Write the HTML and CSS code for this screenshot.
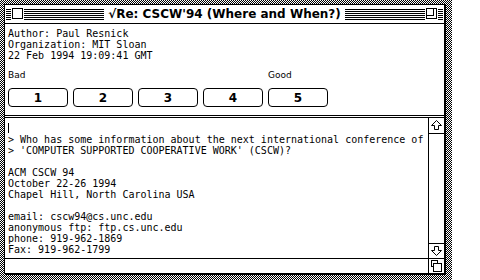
FILE: index.html
```html
<!DOCTYPE html>
<html>
<head>
    <link rel="stylesheet" href="styles.css">
</head>
<body>
    <div class="desktop">
        <div class="window">
            <div class="titlebar">
                <div class="stripes edge"></div>
                <div class="box-gap"><div class="close-box"></div></div>
                <div class="stripes"></div>
                <div class="title">√Re: CSCW'94 (Where and When?)</div>
                <div class="stripes"></div>
                <div class="box-gap"><div class="zoom-box"><div class="zoom-inner"></div></div></div>
                <div class="stripes edge"></div>
            </div>

            <div class="header">
                <div>Author: Paul Resnick</div>
                <div>Organization: MIT Sloan</div>
                <div>22 Feb 1994 19:09:41 GMT</div>
            </div>

            <div class="rating">
                <div class="rating-label">Bad</div>
                <div class="rating-label good">Good</div>
                <button class="rate-btn">1</button>
                <button class="rate-btn">2</button>
                <button class="rate-btn">3</button>
                <button class="rate-btn">4</button>
                <button class="rate-btn">5</button>
            </div>

            <div class="separator"></div>

            <div class="main">
                <div class="text-col">
                    <div class="message"><span class="cursor"></span>
&gt; Who has some information about the next international conference of
&gt; 'COMPUTER SUPPORTED COOPERATIVE WORK' (CSCW)?

ACM CSCW 94
October 22-26 1994
Chapel Hill, North Carolina USA

email: cscw94@cs.unc.edu
anonymous ftp: ftp.cs.unc.edu
phone: 919-962-1869
Fax: 919-962-1799</div>
                    <div class="hbar"></div>
                </div>
                <div class="vscroll">
                    <div class="arrow up">
                        <svg width="15" height="15" viewBox="0 0 15 15">
                            <polygon points="7.5,2.5 12.5,7.5 9.5,7.5 9.5,11.5 5.5,11.5 5.5,7.5 2.5,7.5" fill="#fff" stroke="#000" stroke-width="1"/>
                        </svg>
                    </div>
                    <div class="track"></div>
                    <div class="arrow down">
                        <svg width="15" height="14" viewBox="0 0 15 14">
                            <polygon points="7.5,11.5 12.5,6.5 9.5,6.5 9.5,2.5 5.5,2.5 5.5,6.5 2.5,6.5" fill="#fff" stroke="#000" stroke-width="1"/>
                        </svg>
                    </div>
                    <div class="grow">
                        <svg width="15" height="14" viewBox="0 0 15 14">
                            <rect x="2.5" y="1.5" width="6" height="6" fill="#fff" stroke="#000"/>
                            <rect x="4.5" y="4.5" width="8" height="8" fill="#fff" stroke="#000"/>
                        </svg>
                    </div>
                </div>
            </div>
        </div>
    </div>
</body>
</html>
```

FILE: styles.css
```css
body {
    margin: 0;
    width: 480px;
    height: 280px;
    overflow: hidden;
    background: #fff;
    font-family: "DejaVu Sans Mono", monospace;
}
.desktop {
    width: 452px;
    height: 280px;
    padding: 4px 0 0 4px;
    box-sizing: border-box;
    background: repeating-conic-gradient(#000 0 25%, #fff 0 50%) 0 0 / 2px 2px;
}
.window {
    width: 441px;
    height: 270px;
    box-sizing: border-box;
    border: 1px solid #000;
    background: #fff;
    box-shadow: 1px 1px 0 #000;
    display: flex;
    flex-direction: column;
}

/* title bar */
.titlebar {
    height: 18px;
    border-bottom: 1px solid #000;
    display: flex;
    align-items: flex-start;
    padding: 0 1px;
    flex-shrink: 0;
}
.stripes {
    flex: 1;
    height: 11px;
    margin-top: 4px;
    background: repeating-linear-gradient(#000 0 1px, #fff 1px 2px);
}
.stripes.edge {
    flex: 0 0 5px;
}
.box-gap {
    padding: 3px 1px 0;
}
.close-box,
.zoom-box {
    width: 11px;
    height: 11px;
    box-sizing: border-box;
    border: 1px solid #000;
    background: #fff;
}
.zoom-inner {
    width: 6px;
    height: 6px;
    border-right: 1px solid #000;
    border-bottom: 1px solid #000;
}
.title {
    padding: 0 4px;
    font-family: "DejaVu Sans", sans-serif;
    font-weight: bold;
    font-size: 12px;
    line-height: 18px;
    white-space: nowrap;
}

/* header */
.header {
    padding: 4px 3px 0;
    font-size: 10px;
    line-height: 11px;
}

/* rating */
.rating {
    display: grid;
    grid-template-columns: repeat(5, 60px);
    column-gap: 5px;
    row-gap: 7px;
    padding: 9px 3px 0;
}
.rating-label {
    font-family: "DejaVu Sans", sans-serif;
    font-size: 9px;
    line-height: 11px;
}
.rating-label.good {
    grid-column: 5;
}
.rate-btn {
    height: 19px;
    border: 1px solid #000;
    border-radius: 4px;
    background: #fff;
    padding: 0;
    font-family: "DejaVu Sans", sans-serif;
    font-weight: bold;
    font-size: 12px;
    color: #000;
}
.separator {
    height: 1px;
    margin-top: 8px;
    border-top: 1px solid #000;
    border-bottom: 1px solid #000;
    flex-shrink: 0;
}

/* message area */
.main {
    flex: 1;
    display: flex;
    min-height: 0;
}
.text-col {
    flex: 1;
    display: flex;
    flex-direction: column;
}
.message {
    flex: 1;
    padding: 5px 3px 0;
    font-size: 10px;
    line-height: 11px;
    white-space: pre;
    border-bottom: 1px solid #000;
    overflow: hidden;
}
.cursor {
    display: inline-block;
    width: 1px;
    height: 10px;
    background: #000;
    vertical-align: top;
}
.hbar {
    height: 14px;
}
.vscroll {
    width: 15px;
    border-left: 1px solid #000;
    display: flex;
    flex-direction: column;
}
.arrow svg,
.grow svg {
    display: block;
}
.arrow.up {
    height: 15px;
    border-bottom: 1px solid #000;
}
.track {
    flex: 1;
}
.arrow.down {
    height: 14px;
    border-top: 1px solid #000;
}
.grow {
    height: 14px;
    border-top: 1px solid #000;
}
```
